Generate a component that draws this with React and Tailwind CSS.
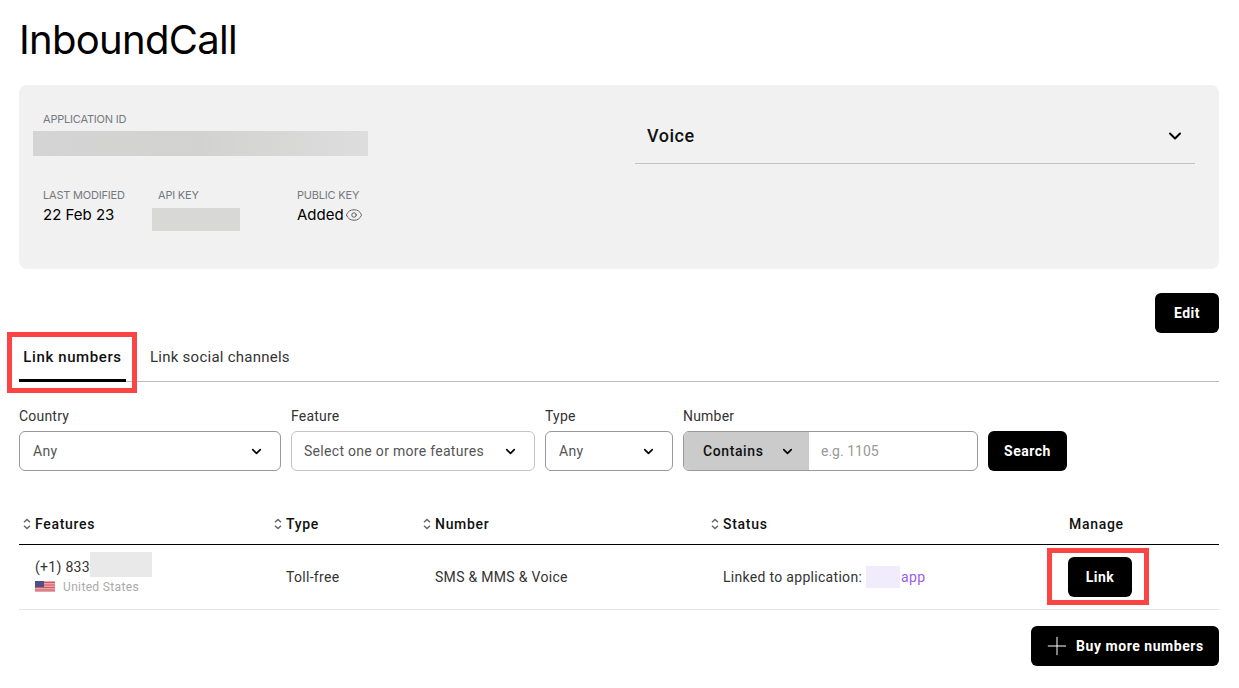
import React from 'react';
import { ChevronDown, Eye, Plus } from 'lucide-react';

const SortIcon = () => (
  <svg width="8" height="12" viewBox="0 0 8 12" className="shrink-0 text-[#666]" fill="none" stroke="currentColor" strokeWidth="1.5">
    <path d="M1 4.2 4 1.5l3 2.7M1 7.8l3 2.7 3-2.7" />
  </svg>
);

const Flag = () => (
  <svg width="20" height="11" viewBox="0 0 20 11" className="shrink-0">
    <rect width="20" height="11" fill="#e9a3a8" />
    <path d="M0 1.5h20M0 4h20M0 6.5h20M0 9h20" stroke="#cf5a63" strokeWidth="1" />
    <rect width="9" height="6" fill="#4b4f8a" />
  </svg>
);

const Label = ({ children }) => (
  <div className="text-[11px] leading-[14px] tracking-[-0.2px] text-[#76797e] font-['Inter',sans-serif]">{children}</div>
);

const SelectBox = ({ label, value, width, dim }) => (
  <div className={`flex flex-col ${width}`}>
    <div className="text-sm leading-4 text-[#333] mb-[7px] tracking-[0.2px]">{label}</div>
    <div className={`h-10 rounded-md border bg-white flex items-center justify-between ${dim ? 'border-[#c4c4c4] pl-3 pr-4' : 'border-[#999] pl-[13px] pr-4'}`}>
      <span className="text-sm text-[#555] tracking-[0.3px]">{value}</span>
      <ChevronDown size={15} strokeWidth={2.6} className="text-black" />
    </div>
  </div>
);

const HeadCell = ({ children, className, sort = true }) => (
  <div className={`flex items-center gap-[4px] text-sm font-medium tracking-[0.7px] text-[#111] ${className}`}>
    {sort && <SortIcon />}
    {children}
  </div>
);

export default function App() {
  return (
    <div className="relative h-[688px] w-[1239px] overflow-hidden bg-white pl-[19px] pr-5 font-['Roboto',sans-serif]">
      <h1 className="pt-[15px] h-[85px] text-[40px] leading-[50px] font-normal tracking-[-0.7px] text-black font-['Inter',sans-serif]">
        InboundCall
      </h1>

      <div className="h-[184px] rounded-lg bg-[#f1f1f1] flex">
        <div className="w-[616px] pl-6 pt-[27px]">
          <Label>APPLICATION ID</Label>
          <div className="-ml-[10px] mt-[5px] h-[25px] w-[335px] bg-gradient-to-r from-[#d4d4d4] via-[#d2d2d1] to-[#dddddd]" />
          <div className="flex mt-[32px]">
            <div className="w-[115px]">
              <Label>LAST MODIFIED</Label>
              <div className="mt-[4px] text-[15px] leading-[18px] text-black font-['Inter',sans-serif]">22 Feb 23</div>
            </div>
            <div className="w-[139px]">
              <Label>API KEY</Label>
              <div className="-ml-[6px] mt-[6px] h-[23px] w-[88px] bg-[#d8d8d7]" />
            </div>
            <div>
              <Label>PUBLIC KEY</Label>
              <div className="mt-[4px] flex items-center gap-[1px] text-[15px] leading-[18px] text-black font-['Inter',sans-serif]">
                Added <Eye size={18} strokeWidth={1.2} className="text-[#555]" />
              </div>
            </div>
          </div>
        </div>
        <div className="w-[560px] pt-[25px]">
          <div className="h-[55px] border-b border-[#c4c4c4] flex items-center justify-between pl-3 pr-[10px] -mt-[1px]">
            <span className="text-lg font-medium text-[#111] tracking-[0.5px]">Voice</span>
            <ChevronDown size={20} strokeWidth={2.4} className="text-black" />
          </div>
        </div>
      </div>

      <div className="flex justify-end mt-6">
        <button className="h-10 w-[64px] rounded-md bg-black text-white text-sm font-bold tracking-[0.5px]">Edit</button>
      </div>

      <div className="flex h-[49px] items-end border-b border-[#bbb]">
        <div className="w-[107px] h-[49px] border-b-[3px] border-black -mb-px text-center pt-[15px] text-[15px] leading-[18px] font-medium tracking-[0.6px] text-[#111]">
          Link numbers
        </div>
        <div className="ml-6 h-[49px] pt-4 text-[15px] leading-[18px] tracking-[0.25px] text-[#333]">Link social channels</div>
      </div>

      <div className="flex items-end gap-[10px] mt-[26px]">
        <SelectBox label="Country" value="Any" width="w-[262px]" />
        <SelectBox label="Feature" value="Select one or more features" width="w-[244px]" dim />
        <SelectBox label="Type" value="Any" width="w-[128px]" />
        <div className="flex flex-col w-[295px]">
          <div className="text-sm leading-4 text-[#333] mb-[7px] tracking-[0.2px]">Number</div>
          <div className="flex h-10 rounded-md border border-[#999] overflow-hidden bg-white">
            <div className="w-[126px] -my-px -ml-px bg-[#cbcbcb] flex items-center pl-5 pr-[14px] justify-between">
              <span className="text-sm font-medium tracking-[0.6px] text-[#111]">Contains</span>
              <ChevronDown size={15} strokeWidth={2.6} className="text-black" />
            </div>
            <span className="pl-3 self-center text-sm text-[#999]">e.g. 1105</span>
          </div>
        </div>
        <button className="h-10 w-[79px] rounded-md bg-black text-white text-sm font-bold tracking-[0.5px]">Search</button>
      </div>

      <div className="mt-[33px] grid grid-cols-[251px_149px_288px_358px_154px] h-[41px] border-b border-black items-center">
        <HeadCell className="pl-1">Features</HeadCell>
        <HeadCell className="pl-1">Type</HeadCell>
        <HeadCell className="pl-1">Number</HeadCell>
        <HeadCell className="pl-1">Status</HeadCell>
        <HeadCell className="pl-1" sort={false}>Manage</HeadCell>
      </div>

      <div className="grid grid-cols-[251px_149px_288px_358px_154px] h-[65px] border-b border-[#e4e4e4] items-center text-sm tracking-[0.3px] text-[#333]">
        <div className="pl-4 mb-[6px]">
          <div className="flex items-center h-[25px]">
            <span>(+1) 833</span>
            <span className="mb-[6px] h-[25px] w-[62px] bg-[#e9e9e9]" />
          </div>
          <div className="flex items-center gap-2 text-xs leading-[14px] text-[#aaa] tracking-[0.35px]">
            <Flag /> United States
          </div>
        </div>
        <div className="pl-4">Toll-free</div>
        <div className="pl-4">SMS &amp; MMS &amp; Voice</div>
        <div className="pl-4 flex items-center">
          Linked to application:
          <span className="ml-1 h-[22px] w-[34px] bg-[#f0ecfc]" />
          <span className="ml-px text-[#9a5cf0]">app</span>
        </div>
        <div className="pl-[3px]">
          <button className="h-10 w-[64px] rounded-md bg-black text-white text-sm font-bold tracking-[0.5px]">Link</button>
        </div>
      </div>

      <div className="flex justify-end mt-4">
        <button className="h-10 w-[188px] rounded-md bg-black text-white text-sm font-bold tracking-[0.55px] flex items-center pl-[11px] gap-1">
          <Plus size={30} strokeWidth={0.8} />
          Buy more numbers
        </button>
      </div>

      {/* red annotation boxes */}
      <div className="absolute left-[7px] top-[332px] h-[61px] w-[130px] border-[5px] border-[#fb4444]" />
      <div className="absolute left-[1047px] top-[548px] h-[57px] w-[102px] border-[5px] border-[#fb4444]" />
    </div>
  );
}
